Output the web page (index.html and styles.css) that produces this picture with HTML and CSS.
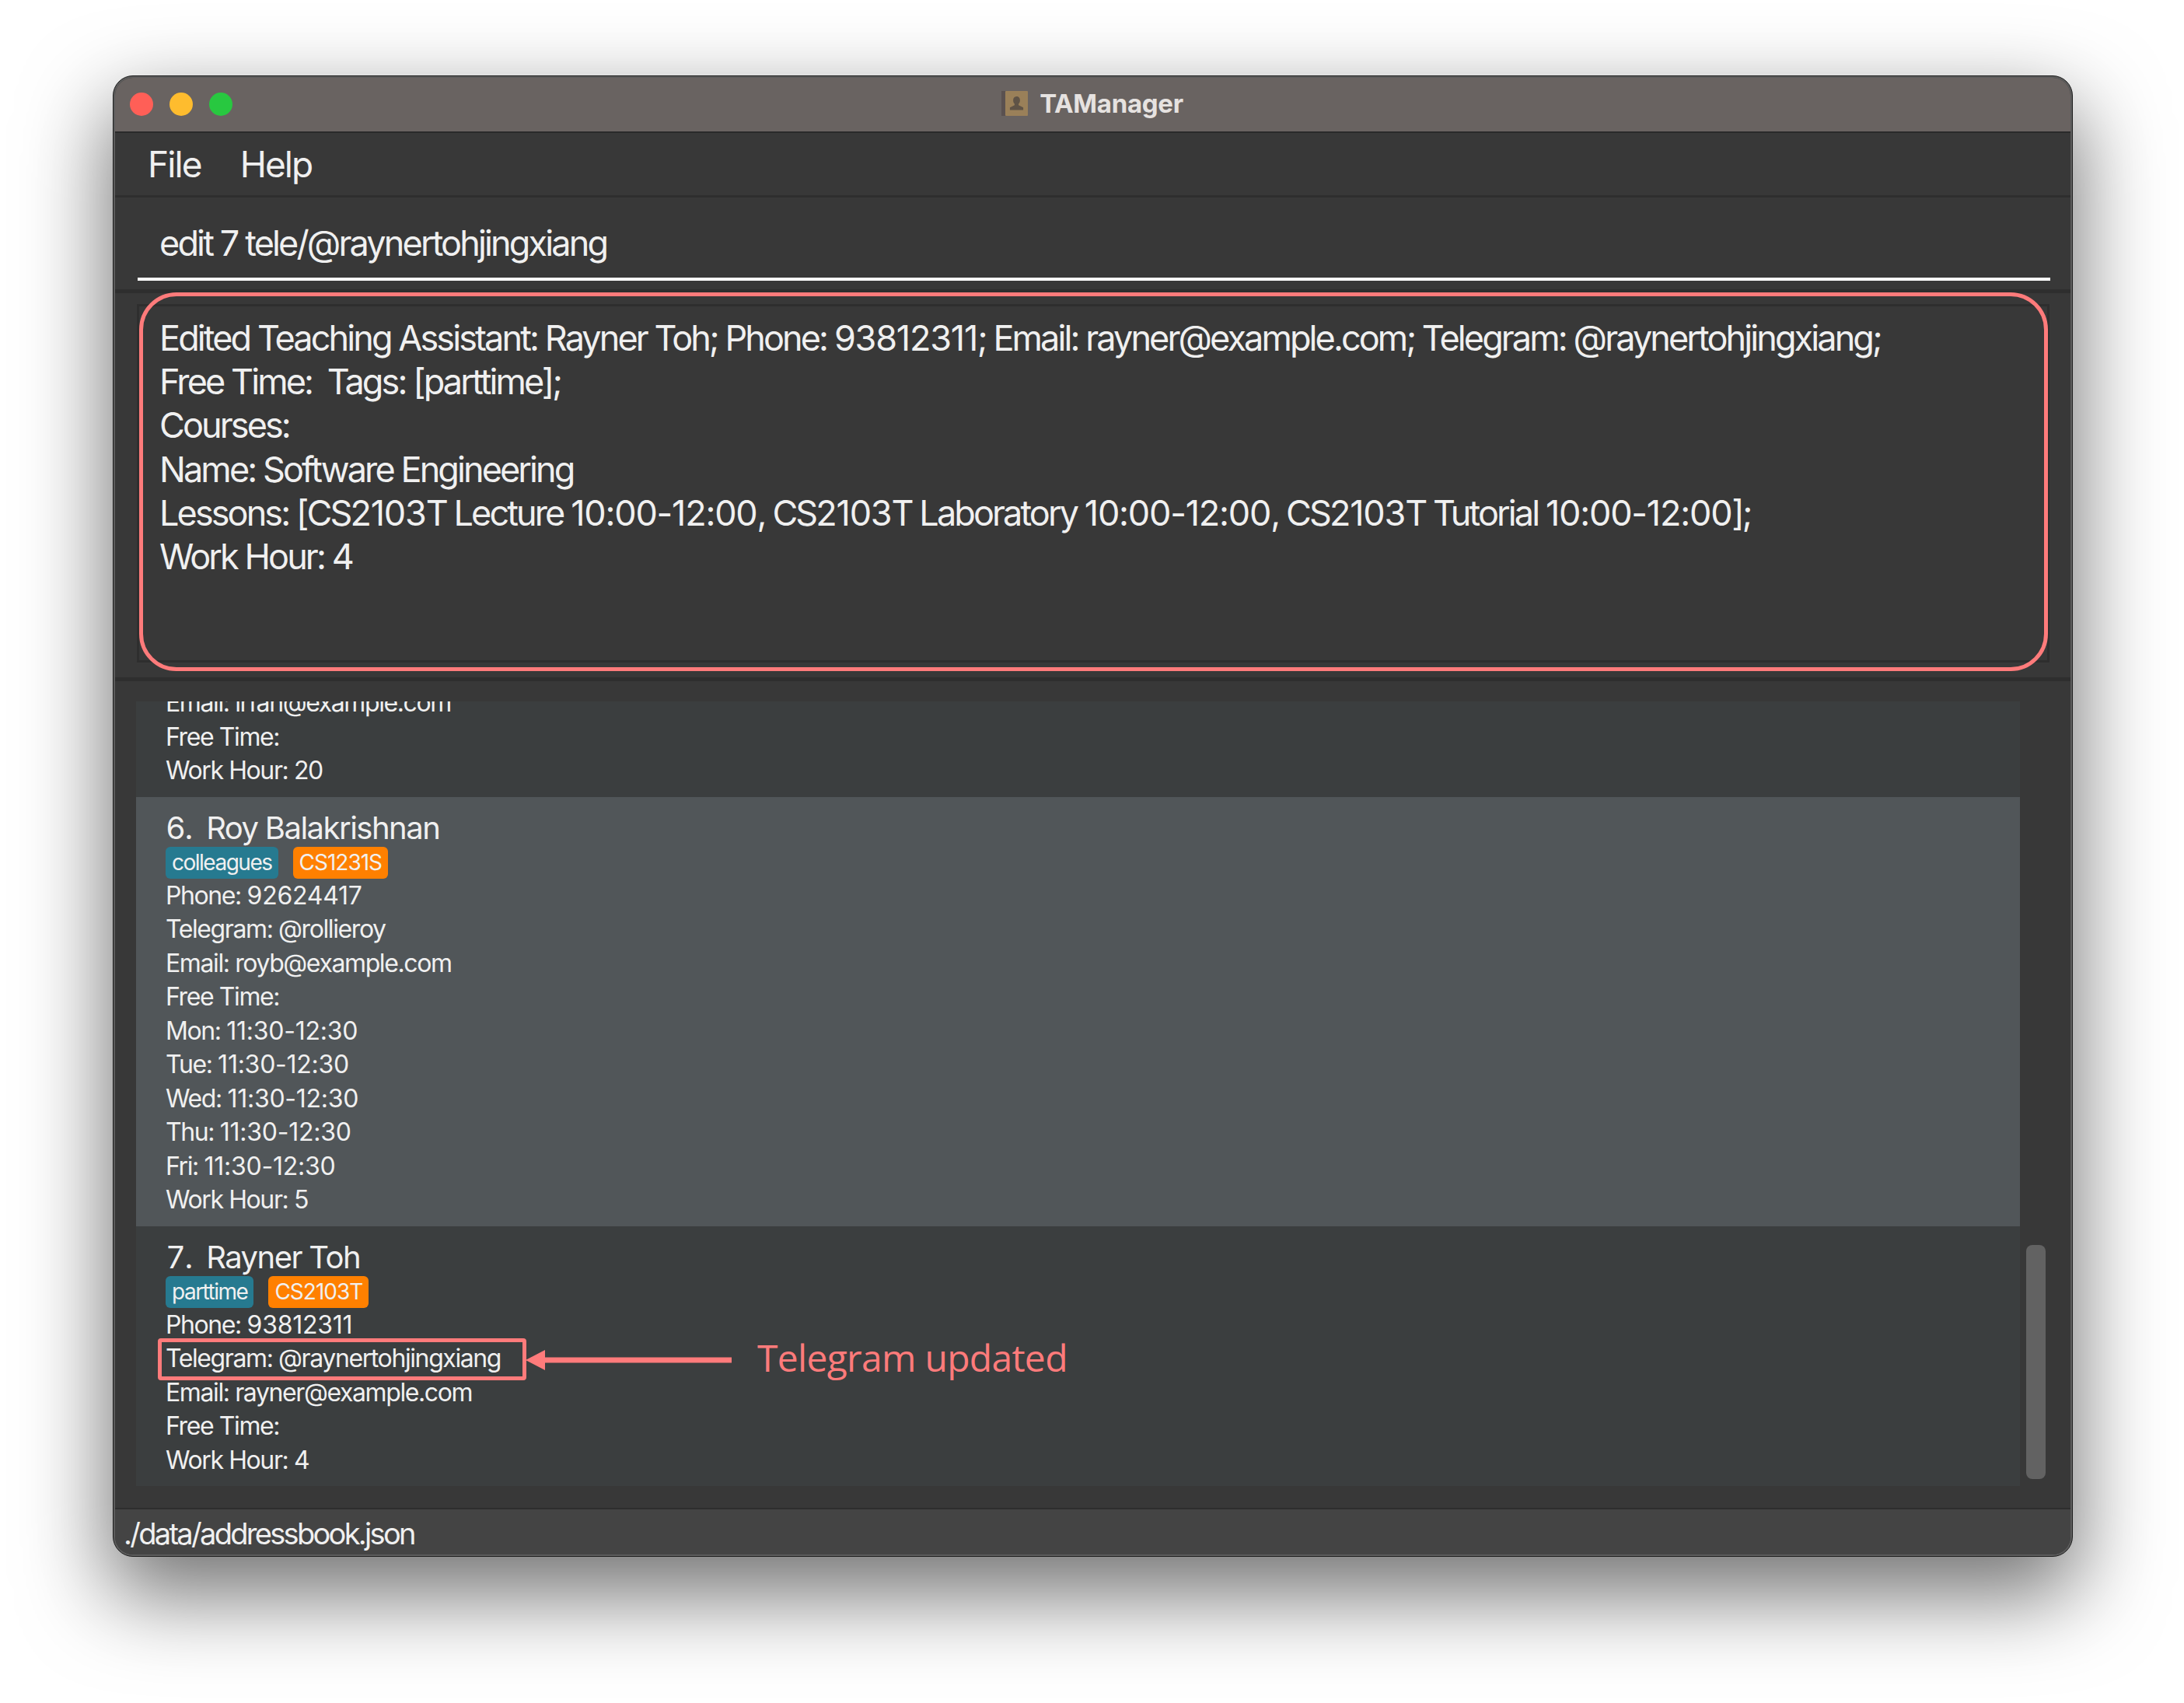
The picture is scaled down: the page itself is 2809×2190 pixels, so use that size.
FILE: index.html
```html
<!DOCTYPE html>
<html>
<head>
    <title>TAManager</title>
    <link rel="stylesheet" href="styles.css">
</head>
<body>
    <div class="window">
        <div class="window-inner">
            <div class="titlebar">
                <div class="lights">
                    <span class="light light-red"></span>
                    <span class="light light-yellow"></span>
                    <span class="light light-green"></span>
                </div>
                <div class="title">
                    <svg class="title-icon" viewBox="0 0 34 32" width="34" height="32">
                        <rect x="0" y="0" width="6" height="32" fill="#5a5150"/>
                        <rect x="5" y="0" width="29" height="32" rx="1" fill="#9a8059"/>
                        <path d="M19.5 7c-3 0-4.400 2.200-4.400 5 0 2 .8 3.600 1.800 4.600v1.600l-6 3v3.300h17.200v-3.300l-6-3v-1.600c1-1 1.800-2.600 1.800-4.600 0-2.800-1.400-5-4.400-5z" fill="#5f5346"/>
                    </svg>
                    <span>TAManager</span>
                </div>
            </div>

            <div class="menubar">
                <span class="menu-item">File</span>
                <span class="menu-item">Help</span>
            </div>

            <div class="command-box">
                <div class="command-input">edit 7 tele/@raynertohjingxiang</div>
            </div>

            <div class="result-panel">
                <div class="result-box">
                    <div class="result-line">Edited Teaching Assistant: Rayner Toh; Phone: <span class="num">93812311</span>; Email: rayner@example.com; Telegram: @raynertohjingxiang;</div>
                    <div class="result-line">Free Time:  Tags: [parttime];</div>
                    <div class="result-line">Courses:</div>
                    <div class="result-line">Name: Software Engineering</div>
                    <div class="result-line">Lessons: [CS<span class="num">2103</span>T Lecture <span class="num">10:00-12:00</span>, CS<span class="num">2103</span>T Laboratory <span class="num">10:00-12:00</span>, CS<span class="num">2103</span>T Tutorial <span class="num">10:00-12:00</span>];</div>
                    <div class="result-line">Work Hour: 4</div>
                </div>
                <div class="result-highlight"></div>
            </div>

            <div class="list-panel">
                <div class="list">
                    <div class="card">
                        <div class="row">Email: irfan@example.com</div>
                        <div class="row">Free Time:</div>
                        <div class="row">Work Hour: 20</div>
                    </div>
                    <div class="card card-alt">
                        <div class="name">6.  Roy Balakrishnan</div>
                        <div class="tags">
                            <span class="tag">colleagues</span>
                            <span class="tag tag-course">CS1231S</span>
                        </div>
                        <div class="row">Phone: <span class="num">92624417</span></div>
                        <div class="row">Telegram: @rollieroy</div>
                        <div class="row">Email: royb@example.com</div>
                        <div class="row">Free Time:</div>
                        <div class="row">Mon: <span class="num">11:30-12:30</span></div>
                        <div class="row">Tue: <span class="num">11:30-12:30</span></div>
                        <div class="row">Wed: <span class="num">11:30-12:30</span></div>
                        <div class="row">Thu: <span class="num">11:30-12:30</span></div>
                        <div class="row">Fri: <span class="num">11:30-12:30</span></div>
                        <div class="row">Work Hour: 5</div>
                    </div>
                    <div class="card">
                        <div class="name">7.  Rayner Toh</div>
                        <div class="tags">
                            <span class="tag">parttime</span>
                            <span class="tag tag-course">CS2103T</span>
                        </div>
                        <div class="row">Phone: <span class="num">93812311</span></div>
                        <div class="row row-marked">
                            Telegram: @raynertohjingxiang
                            <div class="row-highlight"></div>
                            <div class="callout">
                                <svg class="callout-arrow" viewBox="0 0 265 26" width="265" height="26">
                                    <path d="M0 13 25 0v9.500h240v7H25V26z" fill="#ff7b7b"/>
                                </svg>
                                <span class="callout-text">Telegram updated</span>
                            </div>
                        </div>
                        <div class="row">Email: rayner@example.com</div>
                        <div class="row">Free Time:</div>
                        <div class="row">Work Hour: 4</div>
                    </div>
                </div>
                <div class="scrollbar">
                    <div class="scroll-thumb"></div>
                </div>
            </div>

            <div class="statusbar">./data/addressbook.json</div>
        </div>
    </div>
</body>
</html>
```

FILE: styles.css
```css
* {
    box-sizing: border-box;
}
body {
    margin: 0;
    padding: 97px 143px 188px 145px;
    background-color: #ffffff;
    font-family: Inter, "Liberation Sans", sans-serif;
    color: #f0f0f0;
}
.window {
    width: 2521px;
    height: 1905px;
    padding: 2px;
    background: #5c5c5c;
    border: 1px solid #1e1e1e;
    border-radius: 26px;
    box-shadow: 0 44px 110px 6px rgba(0, 0, 0, 0.55);
}
.window-inner {
    display: flex;
    flex-direction: column;
    height: 100%;
    background: #383838;
    border-radius: 23px;
    overflow: hidden;
}
.titlebar {
    display: flex;
    align-items: center;
    justify-content: center;
    position: relative;
    flex: none;
    height: 71px;
    padding-bottom: 3px;
    background: #696361;
    border-bottom: 2px solid #2a2a2a;
}
.lights {
    position: absolute;
    left: 19px;
    top: 19px;
    display: flex;
    gap: 21px;
}
.light {
    width: 30px;
    height: 30px;
    border-radius: 50%;
}
.light-red {
    background: #ff5f57;
}
.light-yellow {
    background: #febc2e;
}
.light-green {
    background: #28c840;
}
.title {
    display: flex;
    align-items: center;
    gap: 15px;
    margin-left: -1px;
    font-size: 33px;
    font-weight: 700;
    letter-spacing: -0.3px;
    color: #e6e2e0;
}
.menubar {
    display: flex;
    flex: none;
    align-items: center;
    gap: 50px;
    height: 83px;
    padding: 0 0 0 42px;
    border-bottom: 3px solid #2e2e2e;
    font-size: 46px;
    letter-spacing: -1.9px;
}
.command-box {
    flex: none;
    height: 123px;
    padding: 24px 26px 0 29px;
    border-bottom: 5px solid #2e2e2e;
}
.command-input {
    height: 83px;
    padding: 0 0 0 28px;
    border-bottom: 4px solid #ffffff;
    font-size: 45px;
    letter-spacing: -2.85px;
    line-height: 70px;
}
.result-panel {
    position: relative;
    flex: none;
    height: 499px;
    padding: 14px 27px 19px 28px;
    border-bottom: 5px solid #2e2e2e;
}
.result-box {
    height: 100%;
    padding: 13px 26px;
    border: 3px solid #2e2e2e;
    font-size: 45px;
    letter-spacing: -2.9px;
    line-height: 56.2px;
}
.result-line {
    white-space: pre;
}
.result-box .num {
    letter-spacing: -1.2px;
}
.result-highlight {
    position: absolute;
    left: 31px;
    right: 29px;
    top: -1px;
    height: 487px;
    border: 5px solid #ff7b7b;
    border-radius: 48px;
}
.list-panel {
    display: flex;
    flex: 1;
    min-height: 0;
    padding: 26px 0 28px 27px;
}
.list {
    display: flex;
    flex-direction: column;
    justify-content: flex-end;
    flex: none;
    width: 2423px;
    overflow: hidden;
}
.card {
    flex: none;
    padding: 17px 0 12px 38px;
    background: #3b3e3f;
    font-size: 32px;
    letter-spacing: -1.4px;
}
.card-alt {
    background: #515659;
}
.name {
    height: 47px;
    font-size: 40px;
    font-variant-numeric: tabular-nums;
    letter-spacing: -1.5px;
    line-height: 46px;
    white-space: pre;
}
.tags {
    display: flex;
    gap: 19px;
    height: 41px;
}
.tag {
    padding: 0 8px;
    background: #267a90;
    border-radius: 6px;
    font-size: 28px;
    letter-spacing: -1.5px;
    line-height: 41px;
}
.tag-course {
    background: #ff8000;
    letter-spacing: -1px;
}
.row {
    height: 43.5px;
    line-height: 43.5px;
    white-space: nowrap;
}
.row .num {
    letter-spacing: -0.25px;
}
.row-marked {
    position: relative;
}
.row-highlight {
    position: absolute;
    left: -10px;
    top: -4px;
    width: 474px;
    height: 54px;
    border: 5px solid #ff7b7b;
    border-radius: 4px;
}
.callout {
    position: absolute;
    left: 463px;
    top: -1px;
    display: flex;
    align-items: center;
    height: 50px;
    gap: 33px;
    letter-spacing: normal;
}
.callout-text {
    margin-top: -7px;
    font-family: "Open Sans", sans-serif;
    font-size: 48px;
    font-weight: 500;
    letter-spacing: -0.7px;
    color: #ff7b7b;
}
.scrollbar {
    flex: 1;
    display: flex;
    align-items: flex-end;
    padding: 0 32px 9px 8px;
}
.scroll-thumb {
    width: 25px;
    height: 301px;
    background: #626262;
    border-radius: 8px;
}
.statusbar {
    flex: none;
    height: 60px;
    padding: 4px 0 0 11px;
    background: #444444;
    border-top: 2px solid #2e2e2e;
    font-size: 38px;
    letter-spacing: -2.7px;
    line-height: 54px;
}
```
